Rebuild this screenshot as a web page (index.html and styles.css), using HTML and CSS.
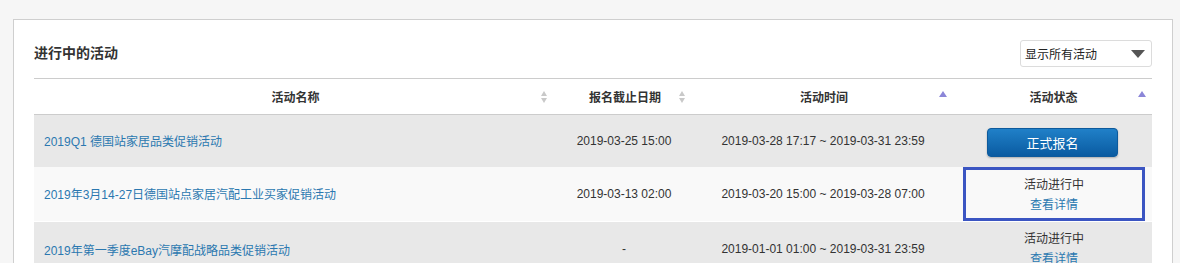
FILE: index.html
```html
<!DOCTYPE html>
<html lang="zh-CN">
<head>
<meta charset="utf-8">
<title>进行中的活动</title>
<link rel="stylesheet" href="styles.css">
</head>
<body>
<section class="panel">
  <div class="panel-head">
    <h2 class="title">进行中的活动</h2>
    <div class="select">
      <span>显示所有活动</span>
      <span class="caret"></span>
    </div>
  </div>
  <table class="grid">
    <colgroup>
      <col class="c1"><col class="c2"><col class="c3"><col class="c4">
    </colgroup>
    <thead>
      <tr>
        <th><div class="th"><span></span><span>活动名称</span><span class="sort-both"><i class="up"></i><i class="down"></i></span></div></th>
        <th><div class="th"><span></span><span>报名截止日期</span><span class="sort-both"><i class="up"></i><i class="down"></i></span></div></th>
        <th><div class="th"><span></span><span>活动时间</span><span class="sort-up"></span></div></th>
        <th><div class="th"><span></span><span>活动状态</span><span class="sort-up"></span></div></th>
      </tr>
    </thead>
    <tbody>
      <tr class="r1">
        <td class="name"><a href="#">2019Q1 德国站家居品类促销活动</a></td>
        <td class="ctr">2019-03-25 15:00</td>
        <td class="ctr">2019-03-28 17:17 ~ 2019-03-31 23:59</td>
        <td class="ctr"><button class="btn">正式报名</button></td>
      </tr>
      <tr class="r2">
        <td class="name"><a href="#">2019年3月14-27日德国站点家居汽配工业买家促销活动</a></td>
        <td class="ctr">2019-03-13 02:00</td>
        <td class="ctr">2019-03-20 15:00 ~ 2019-03-28 07:00</td>
        <td class="ctr"><div class="status marked"><div>活动进行中</div><a href="#">查看详情</a></div></td>
      </tr>
      <tr class="r3">
        <td class="name"><a href="#">2019年第一季度eBay汽摩配战略品类促销活动</a></td>
        <td class="ctr">-</td>
        <td class="ctr">2019-01-01 01:00 ~ 2019-03-31 23:59</td>
        <td class="ctr"><div class="status"><div>活动进行中</div><a href="#">查看详情</a></div></td>
      </tr>
    </tbody>
  </table>
</section>
</body>
</html>
```
FILE: styles.css
```css
html { overflow: hidden; background: #f6f6f6; }
body {
  margin: 19px 0 0 13px;
  font-family: "Liberation Sans", Arial, "Noto Sans CJK SC", sans-serif;
  font-size: 12px;
  color: #333;
}
.panel {
  width: 1118px;
  padding: 0 20px 40px;
  background: #fff;
  border: 1px solid #cfcfcf;
}
.panel-head {
  display: flex;
  align-items: center;
  justify-content: space-between;
  padding: 20px 0 11px;
}
.title {
  margin: 0 0 3px;
  font-size: 14px;
  font-weight: 700;
  color: #333;
}
.select {
  box-sizing: border-box;
  width: 132px;
  height: 27px;
  border: 1px solid #dcdcdc;
  border-radius: 3px;
  display: flex;
  align-items: center;
  justify-content: space-between;
  padding: 0 6px 0 4px;
  font-size: 12px;
  color: #222;
}
.caret {
  width: 0; height: 0;
  border-left: 7px solid transparent;
  border-right: 7px solid transparent;
  border-top: 8px solid #555;
}
.grid {
  width: 1118px;
  border-collapse: collapse;
  table-layout: fixed;
}
.c1 { width: 521px; }
.c2 { width: 138px; }
.c3 { width: 260px; }
.c4 { width: 199px; }
thead tr { height: 36px; border-top: 1px solid #ccc; border-bottom: 1px solid #ccc; }
th { padding: 0 6px 0 8px; font-weight: 700; font-size: 12px; color: #333; }
.th {
  display: grid;
  grid-template-columns: 1fr auto 1fr;
  align-items: center;
}
.sort-both {
  justify-self: end;
  display: flex;
  flex-direction: column;
  gap: 2px;
  margin-right: 2px;
}
.sort-both i { display: block; width: 0; height: 0; border-left: 3.5px solid transparent; border-right: 3.5px solid transparent; }
.sort-both .up { border-bottom: 5px solid #c9c9c9; }
.sort-both .down { border-top: 5px solid #c9c9c9; }
.sort-up {
  justify-self: end;
  align-self: start;
  margin-top: 3px;
  width: 0; height: 0;
  border-left: 4.5px solid transparent;
  border-right: 4.5px solid transparent;
  border-bottom: 6px solid #8b86d8;
}
td { padding: 0 10px; }
.ctr { text-align: center; color: #333; }
.name a { color: #2b78b0; text-decoration: none; }
.r1 { height: 52px; background: #e8e8e8; }
.r2 { height: 55px; background: #f9f9f9; }
.r3 { height: 55px; background: #e8e8e8; border-top: 1px solid #fff; }
.r1 td, .r2 td, .r3 td { vertical-align: middle; }
.btn {
  width: 131px;
  height: 29px;
  border: 1px solid #0d5a9c;
  border-radius: 4px;
  background: linear-gradient(#2080c8, #0a5ba1);
  color: #fff;
  font-family: "Liberation Sans", "Noto Sans CJK SC", sans-serif;
  font-size: 13px;
  box-shadow: 0 1px 2px rgba(0,0,0,0.25);
  margin-top: 3px;
}
.status {
  box-sizing: border-box;
  width: 182px;
  margin: 0 auto;
  border: 3px solid transparent;
  padding: 5px 0 3px;
  line-height: 20px;
  color: #333;
}
.status a { color: #2b78b0; text-decoration: none; }
.marked { border-color: #3b55c2; }
.r3 .status { margin-top: -3px; }
```
